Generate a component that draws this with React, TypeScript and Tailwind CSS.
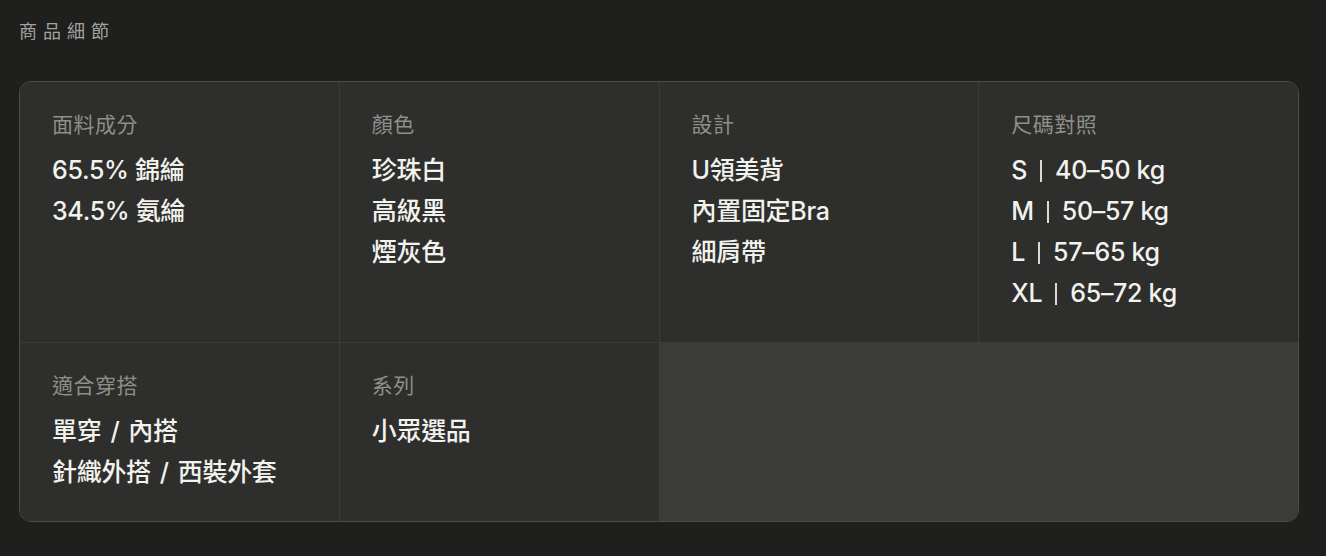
const details = [
  { label: "面料成分", values: ["65.5% 錦綸", "34.5% 氨綸"] },
  { label: "顏色", values: ["珍珠白", "高級黑", "煙灰色"] },
  { label: "設計", values: ["U領美背", "內置固定Bra", "細肩帶"] },
  {
    label: "尺碼對照",
    values: ["S|40–50 kg", "M|50–57 kg", "L|57–65 kg", "XL|65–72 kg"],
  },
  { label: "適合穿搭", values: ["單穿/內搭", "針織外搭/西裝外套"] },
  { label: "系列", values: ["小眾選品"] },
];

const Value = ({ text }: { text: string }) => {
  if (text.includes("/")) {
    const [a, b] = text.split("/");
    return (
      <>
        {a}
        <span className="px-[9px]">/</span>
        {b}
      </>
    );
  }
  if (!text.includes("|")) return <>{text}</>;
  const [size, range] = text.split("|");
  return (
    <span className="flex items-center">
      {size}
      <span className="mx-[13px] inline-block w-[2px] h-[22px] bg-[#d8d8d4]" />
      {range}
    </span>
  );
};

export default function App() {
  return (
    <div
      className="min-h-[556px] bg-[#1f1f1e] pl-[19px] pr-[27px] pt-[20px] pb-[35px]"
      style={{ fontFamily: 'Inter, "Noto Sans CJK TC", "Noto Sans", sans-serif' }}
    >
      {/* Header */}
      <h2 className="text-[18px] leading-[24px] tracking-[6px] text-[#a3a39e]">
        商品細節
      </h2>

      {/* Details grid */}
      <div className="mt-[37px] rounded-xl border border-[#4c4c48] overflow-hidden">
        <div className="grid grid-cols-4 gap-px bg-[#3b3c37]">
          {details.map((item) => (
            <div key={item.label} className="bg-[#2e2e2c] px-8 pt-7 pb-7">
              <div className="text-[21px] leading-[30px] text-[#8f8f89] tracking-[0.5px]">
                {item.label}
              </div>
              <div className="mt-2.5">
                {item.values.map((v) => (
                  <div
                    key={v}
                    className="text-[25px] leading-[41px] tracking-[-0.3px] text-[#f2f2ee] font-medium"
                  >
                    <Value text={v} />
                  </div>
                ))}
              </div>
            </div>
          ))}
        </div>
      </div>
    </div>
  );
}
